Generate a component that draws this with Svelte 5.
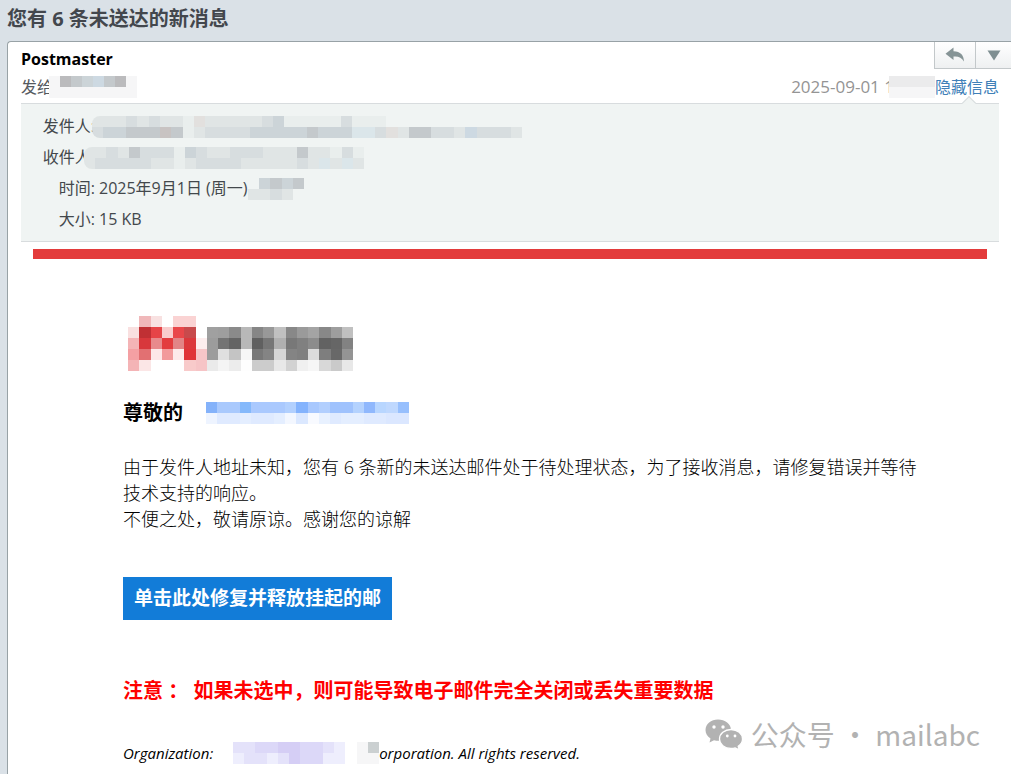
<script lang="ts">
  type Mosaic = string[][];

  const tones: Record<string, string> = {
    '.': 'none',
    '1': '#e9eeed',
    '2': '#e0e5e5',
    '3': '#d7dddf',
    '4': '#ccd4d8',
    '5': '#c4c9cc',
    '6': '#bbbbbd',
    w: '#dbe6ea',
    b: '#cdd9e2',
    p: '#e2e0de',
    q: '#c8c3c2',
    f: '#f6f6f7',
    e: '#ebebec',
    l: '#e4e2fa',
    m: '#dcd8f8',
    n: '#d5cef5',
    o: '#eeeefd',
    g: '#cbd0d1',
  };

  const fromTones = (...rows: string[]): Mosaic => rows.map((row) => [...row].map((c) => tones[c]));
  const fromHex = (...rows: string[]): Mosaic =>
    rows.map((row) => row.split(' ').map((c) => (c === '.' ? 'none' : '#' + (c.length === 2 ? c.repeat(3) : c))));

  const recipientName = fromTones('f654b56f', 'ffffffff');
  const sentHour = fromTones('eeee', 'ffff');
  const sender = fromTones(
    '222323221p2222234111113111............',
    '344555q5123333444445444ww3p255332b3332',
  );
  const recipient = fromTones('2232533314322333222522131', '233333221233332222232w2w2');
  const sentTime = fromTones('.4545', '2232.');
  const organization = fromTones('llmmnnmmlo.fg', 'ollolnmmoo.ff');

  const greeting = fromHex(
    '84b2fa a9c9fd a9c9fd 85b9fb aac9fe aac9fe aac9fe b2d0fe 84b3fd a8c8fe b2cffe 9fc2fd 9fc2fd b4d2fe 90b8fd b8d6ff bfd8fe 97bffd',
    'eef4ff dfeaff dfeaff e4eeff dfeaff dfeaff e4eeff f3f7ff dbe8ff f8faff e8f1ff dfeaff e4eeff e4eeff dfeaff dfeaff dbe7ff dbe7ff',
  );

  const logo = fromHex(
    '. f0b8ba f8e1e1 . fad3d3 fad3d3 . . . . . . . . . . . . . .',
    'f9e0e0 c03034 e64447 f9cccc e9474a c84a4c . a0 9e 8a b8 86 98 c0 88 9a a4 88 9e c0',
    'f4b4b6 d8383c e88a8c e33c3e e28486 dc383c fdeeee 9c 74 64 b8 60 76 b0 78 80 8c 62 66 82',
    'f4a0a3 e27072 fde8e8 f29a9b fdeaea e03438 f6c6c8 9c e0 c4 f6 78 84 d6 84 80 dc 7e 68 94',
    'f4b4b6 fbe6e6 . . . f8caca f6c4c6 ea f4 ec fe cc cc e8 d2 f0 f6 d8 ca e8',
  );
</script>

{#snippet mosaic(name: string, cells: Mosaic)}
  <svg
    class="mosaic {name}"
    viewBox="0 0 {cells[0].length} {cells.length}"
    preserveAspectRatio="none"
    shape-rendering="crispEdges"
    aria-hidden="true"
  >
    {#each cells as row, y}
      {#each row as fill, x}
        <rect {x} {y} width="1" height="1" {fill} />
      {/each}
    {/each}
  </svg>
{/snippet}

<div class="page">
  <h1>您有 6 条未送达的新消息</h1>

  <article class="mail">
    <header>
      <div class="top-row">
        <strong class="from-name">Postmaster</strong>
        <div class="actions">
          <button type="button" aria-label="回复">
            <svg width="20" height="16" viewBox="0 0 20 16">
              <path d="M8.500 0.500L0.500 6.800L8.500 13V9.500C13.500 9 16.500 10.500 19 14.500C18.800 8 15.500 4.500 8.500 4.200Z" fill="#869496" />
            </svg>
          </button>
          <button type="button" aria-label="更多">
            <svg width="14" height="11" viewBox="0 0 14 11">
              <path d="M0.500 0.500H13.500L7 10.500Z" fill="#7f8f92" />
            </svg>
          </button>
        </div>
      </div>

      <div class="sub-row">
        <span class="to">发给</span>
        {@render mosaic('to-name', recipientName)}
        <time>2025-09-01 1</time>
        {@render mosaic('hour', sentHour)}
        <a class="toggle" href="#info">隐藏信息</a>
      </div>

      <dl class="info" id="info">
        <dt>发件人:</dt>
        <dd>{@render mosaic('sender', sender)}</dd>
        <dt>收件人:</dt>
        <dd>{@render mosaic('recipient', recipient)}</dd>
        <dt>时间:</dt>
        <dd>2025年9月1日 (周一){@render mosaic('clock', sentTime)}</dd>
        <dt>大小:</dt>
        <dd>15 KB</dd>
      </dl>
    </header>

    <div class="content">
      {@render mosaic('logo', logo)}

      <h2>尊敬的 {@render mosaic('greeting', greeting)}</h2>

      <p class="text">
        由于发件人地址未知，您有 6 条新的未送达邮件处于待处理状态，为了接收消息，请修复错误并等待技术支持的响应。<br />
        不便之处，敬请原谅。感谢您的谅解
      </p>

      <a class="cta" href="#top">单击此处修复并释放挂起的邮</a>

      <p class="warning">注意 ： 如果未选中，则可能导致电子邮件完全关闭或丢失重要数据</p>

      <p class="legal">
        <span>Organization:</span>
        {@render mosaic('organization', organization)}
        <span>orporation. All rights reserved.</span>
      </p>
    </div>
  </article>

  <div class="watermark">
    <svg width="38" height="31" viewBox="0 0 38 31">
      <path d="M13 0.500C6 0.500 0.500 5 0.500 11C0.500 14.500 2.300 17.500 5.500 19.500L4.500 23.500L9 21.300C10.500 21.700 12 21.800 13.500 21.800C20.500 21.500 26 17 26 11C26 5 20 0.500 13 0.500Z" fill="#b2b2b2" />
      <path d="M26 10.500C19.500 10.500 14.500 14.700 14.500 20C14.500 25.500 19.500 29.500 26 29.500C27.500 29.500 29 29.300 30.200 28.900L34.200 30.800L33.200 27.300C36 25.500 37.500 23 37.500 20C37.500 14.700 32.500 10.500 26 10.500Z" fill="#b2b2b2" stroke="#fff" stroke-width="1.300" />
      <g fill="#fff">
        <circle cx="9" cy="8" r="1.700" />
        <circle cx="18" cy="8" r="1.700" />
        <circle cx="22.300" cy="17" r="1.400" />
        <circle cx="30" cy="17" r="1.400" />
      </g>
    </svg>
    <span>公众号 · mailabc</span>
  </div>
</div>

<style>
  :global(body) {
    margin: 0;
    background: #dae1e7;
  }

  .page {
    position: relative;
    display: flex;
    flex-direction: column;
    box-sizing: border-box;
    min-height: 100vh;
    padding-left: 7px;
    overflow: hidden;
    background: #dae1e7;
    color: #000;
    font-family: 'Open Sans', 'Noto Sans CJK SC', sans-serif;
    font-size: 16px;
  }

  h1 {
    margin: 0;
    padding-bottom: 3px;
    color: #43474d;
    font-size: 20px;
    font-weight: 700;
    line-height: 38px;
  }

  .mail {
    flex: 1;
    border-top: 1px solid #98a2a6;
    border-left: 1px solid #98a2a6;
    border-top-left-radius: 4px;
    background: #fff;
  }

  .mosaic {
    display: block;
    flex-shrink: 0;
    height: 22px;
  }

  .top-row {
    display: flex;
    justify-content: space-between;
    align-items: flex-start;
    padding-left: 13px;
  }

  .from-name {
    font-weight: 700;
    line-height: 34px;
  }

  .actions {
    display: flex;
  }

  .actions button {
    display: flex;
    align-items: center;
    justify-content: center;
    box-sizing: border-box;
    width: 41px;
    height: 27px;
    padding: 0;
    border: 1px solid #c3c8ca;
    border-width: 0 0 1px 1px;
    background: linear-gradient(#fff, #eef0f1);
    cursor: pointer;
  }

  .actions button:last-child {
    width: 36px;
  }

  .sub-row {
    display: flex;
    align-items: center;
    height: 22px;
    padding: 0 12px 5px 13px;
    line-height: 22px;
  }

  .to {
    color: #55595e;
  }

  .to-name {
    width: 88px;
    margin-left: -4px;
  }

  time {
    margin-left: auto;
    color: #949494;
    font-size: 17px;
  }

  .hour {
    width: 46px;
    margin-left: -5px;
  }

  .toggle {
    color: #4080b8;
    text-decoration: none;
  }

  .info {
    position: relative;
    display: grid;
    grid-template-columns: 54px 1fr;
    column-gap: 4px;
    margin: 0 12px 0 13px;
    padding: 7px 0 6px 20px;
    border-top: 1px solid #d8dcde;
    border-bottom: 1px solid #d8dcde;
    background: #f0f4f3;
    color: #43484c;
    line-height: 31px;
  }

  .info::before {
    content: '';
    position: absolute;
    top: -6px;
    right: 25px;
    width: 9px;
    height: 9px;
    border: 1px solid #d8dcde;
    border-width: 1px 0 0 1px;
    background: #f0f4f3;
    transform: rotate(45deg);
  }

  dt {
    text-align: right;
    white-space: nowrap;
  }

  dd {
    display: flex;
    align-items: center;
    margin: 0;
  }

  .sender {
    width: 430px;
    margin-left: -7px;
    border-radius: 8px 0 0 8px;
  }

  .recipient {
    width: 280px;
    margin-left: -15px;
    border-radius: 8px 0 0 8px;
  }

  .clock {
    width: 56px;
  }

  .content {
    margin: 7px 24px 0 25px;
    padding: 57px 62px 0 90px;
    border-top: 10px solid #e33b3b;
  }

  .logo {
    width: 225px;
    height: 55px;
    margin-left: 5px;
  }

  h2 {
    display: flex;
    align-items: center;
    gap: 23px;
    margin: 27px 0 26px;
    font-size: 20px;
    font-weight: 700;
    line-height: 30px;
  }

  .greeting {
    width: 203px;
  }

  .text {
    margin: 0 0 45px;
    font-size: 18px;
    font-weight: 300;
    line-height: 26px;
  }

  .cta {
    display: inline-block;
    padding: 0 11px;
    background: #127cd8;
    color: #fff;
    font-size: 19px;
    font-weight: 700;
    line-height: 43px;
    text-decoration: none;
    vertical-align: top;
  }

  .warning {
    margin: 56px 0 37px;
    color: #f00;
    font-size: 20px;
    font-weight: 700;
    line-height: 30px;
  }

  .legal {
    display: flex;
    align-items: center;
    height: 20px;
    margin: 0;
    font-size: 15px;
    font-style: italic;
    line-height: 20px;
  }

  .organization {
    width: 146px;
    margin-left: 20px;
  }

  .watermark {
    position: absolute;
    right: 31px;
    bottom: 20px;
    display: flex;
    align-items: center;
    gap: 8px;
    color: #b2b2b2;
    font-family: 'Noto Sans CJK SC', sans-serif;
    font-size: 28px;
    line-height: 40px;
  }
</style>
